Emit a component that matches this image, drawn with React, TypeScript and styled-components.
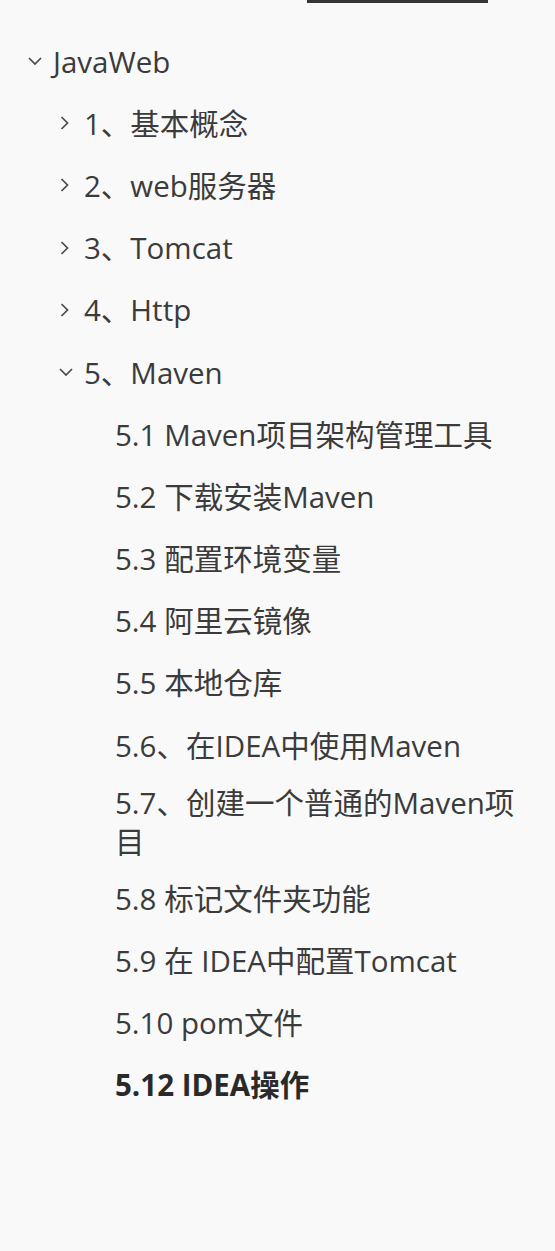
import React from "react";
import styled, { createGlobalStyle } from "styled-components";

const Global = createGlobalStyle`
  html, body { margin: 0; padding: 0; background: #f9f9fa; }
  body { font-family: "Open Sans", "Noto Sans CJK SC", sans-serif; }
`;

const Page = styled.div`
  width: 555px;
  min-height: 1251px;
  background: #f9f9fa;
  display: flex;
  flex-direction: column;
`;

const TopBarRow = styled.div`
  display: flex;
  padding-left: 307px;
`;

const TopBar = styled.div`
  width: 181px;
  height: 3px;
  background: #363636;
`;

const Tree = styled.ul`
  list-style: none;
  margin: 0;
  padding: 27px 25px 0 0;
  display: flex;
  flex-direction: column;
`;

const Row = styled.li<{ $level: number; $bold?: boolean }>`
  display: flex;
  align-items: center;
  min-height: 62.2px;
  padding: 6.5px 0 6.5px ${(p) => 22 + p.$level * 31}px;
  box-sizing: border-box;
  font-size: 29.5px;
  line-height: 39px;
  color: ${(p) => (p.$bold ? "#2a2a2a" : "#3b3b3b")};
  font-weight: ${(p) => (p.$bold ? 700 : 400)};
`;

const Toggle = styled.span`
  flex: 0 0 31px;
  width: 31px;
  height: 39px;
  display: flex;
  align-items: center;
  padding-left: 5px;
  box-sizing: border-box;
  color: #4a4a4a;
`;

const Label = styled.span`
  flex: 1;
`;

const Chevron = ({ open }: { open: boolean }) => (
  <svg width="16" height="16" viewBox="0 0 16 16" fill="none">
    {open ? (
      <polyline points="2,5 8,11 14,5" stroke="currentColor" strokeWidth="1.7" />
    ) : (
      <polyline points="3.5,2 9.5,8 3.5,14" stroke="currentColor" strokeWidth="1.7" />
    )}
  </svg>
);

type Item = { label: string; level: number; toggle?: "open" | "closed"; bold?: boolean };

const items: Item[] = [
  { label: "JavaWeb", level: 0, toggle: "open" },
  { label: "1、基本概念", level: 1, toggle: "closed" },
  { label: "2、web服务器", level: 1, toggle: "closed" },
  { label: "3、Tomcat", level: 1, toggle: "closed" },
  { label: "4、Http", level: 1, toggle: "closed" },
  { label: "5、Maven", level: 1, toggle: "open" },
  { label: "5.1 Maven项目架构管理工具", level: 2 },
  { label: "5.2 下载安装Maven", level: 2 },
  { label: "5.3 配置环境变量", level: 2 },
  { label: "5.4 阿里云镜像", level: 2 },
  { label: "5.5 本地仓库", level: 2 },
  { label: "5.6、在IDEA中使用Maven", level: 2 },
  { label: "5.7、创建一个普通的Maven项目", level: 2 },
  { label: "5.8 标记文件夹功能", level: 2 },
  { label: "5.9 在 IDEA中配置Tomcat", level: 2 },
  { label: "5.10 pom文件", level: 2 },
  { label: "5.12 IDEA操作", level: 2, bold: true },
];

export default function App() {
  return (
    <Page>
      <Global />
      <TopBarRow>
        <TopBar />
      </TopBarRow>
      <Tree>
        {items.map((it, i) => (
          <Row key={i} $level={it.level} $bold={it.bold}>
            <Toggle>{it.toggle ? <Chevron open={it.toggle === "open"} /> : null}</Toggle>
            <Label>{it.label}</Label>
          </Row>
        ))}
      </Tree>
    </Page>
  );
}
